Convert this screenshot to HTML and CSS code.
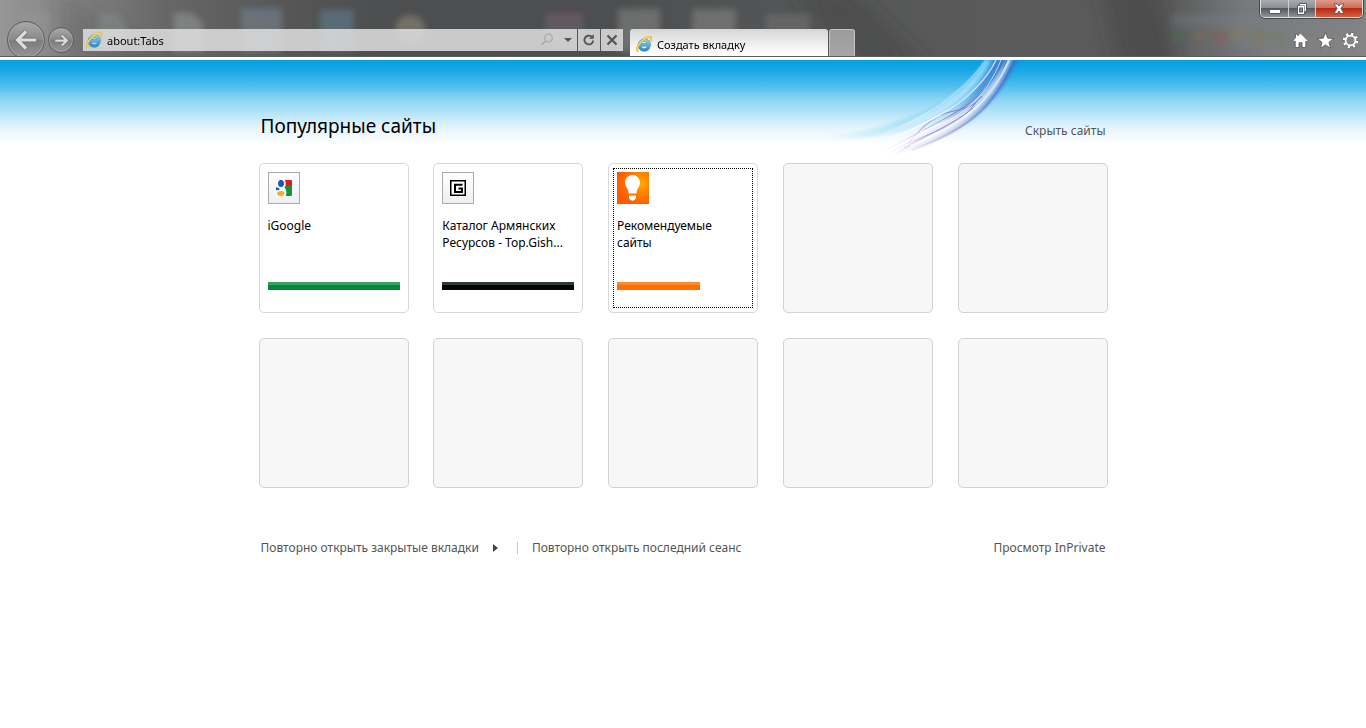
FILE: index.html
```
<!DOCTYPE html>
<html lang="ru">
<head>
<meta charset="utf-8">
<title>Создать вкладку</title>
<link rel="stylesheet" href="styles.css">
</head>
<body>
<svg class="defs" aria-hidden="true">
  <defs>
    <linearGradient id="eBlue" x1="0" y1="0" x2="0" y2="1"><stop offset="0" stop-color="#7fd2f6"/><stop offset="1" stop-color="#2c8fce"/></linearGradient>
    <symbol id="ie" viewBox="0 0 16 16">
      <path d="M12.900 10.800A4.900 4.900 0 1 1 13.200 8.800H4.600" fill="none" stroke="#3f86b5" stroke-width="3.200"/>
      <path d="M12.900 10.800A4.900 4.900 0 1 1 13.200 8.800H4.600" fill="none" stroke="url(#eBlue)" stroke-width="2.500"/>
      <path d="M2.600 15.200C-.6 15.400 1 9.800 5.600 5.400C10 1.200 15 -.4 15.200 2.400C15.300 3.400 14.800 4.400 14.300 5.200" fill="none" stroke="#c79a2d" stroke-width="1.900"/>
      <path d="M2.600 15.200C-.6 15.400 1 9.800 5.600 5.400C10 1.200 15 -.4 15.200 2.400C15.300 3.400 14.800 4.400 14.300 5.200" fill="none" stroke="#fada50" stroke-width="1.400"/>
    </symbol>
  </defs>
</svg>

<header class="chrome">
  <svg class="glass" viewBox="0 0 1366 57" preserveAspectRatio="none" aria-hidden="true">
    <defs>
      <filter id="soft" x="-30%" y="-50%" width="160%" height="200%"><feGaussianBlur stdDeviation="3"/></filter>
      <filter id="softer" x="-30%" y="-50%" width="160%" height="200%"><feGaussianBlur stdDeviation="9"/></filter>
    </defs>
    <g filter="url(#softer)">
      <path d="M790 -10H850L930 70H870Z" fill="#3f3f40" opacity=".35"/>
      <path d="M1100 -20H1150L1175 70H1120Z" fill="#3c3c3d" opacity=".4"/>
      <path d="M60 -10L120 30L180 70H60Z" fill="#3c3c3c" opacity=".2"/>
    </g>
    <g filter="url(#soft)" opacity=".65">
      <rect x="22" y="12" width="28" height="30" fill="#9aa09e" opacity=".5"/>
      <path d="M98 13H116L126 24V50H98Z" fill="#93989a" opacity=".6"/>
      <path d="M174 13H192L203 24V52H174Z" fill="#a1a5a5" opacity=".7"/>
      <rect x="241" y="9" width="41" height="44" fill="#7d8894" opacity=".8"/>
      <rect x="243" y="8" width="37" height="5" fill="#6383ad" opacity=".6"/>
      <rect x="320" y="10" width="34" height="42" fill="#607e90" opacity=".9"/>
      <circle cx="410" cy="30" r="15" fill="#96927c" opacity=".8"/>
      <rect x="545" y="14" width="38" height="34" fill="#716c70" opacity=".7"/>
      <rect x="548" y="13" width="34" height="7" fill="#8b5771" opacity=".6"/>
      <rect x="618" y="9" width="42" height="44" fill="#858585" opacity=".9"/>
      <rect x="692" y="9" width="44" height="44" fill="#858585" opacity=".9"/>
      <rect x="766" y="14" width="44" height="40" fill="#777" opacity=".8"/>
      <rect x="1172" y="14" width="190" height="13" fill="#758188" opacity=".6"/>
      <circle cx="1178" cy="37" r="5" fill="#4e7a50" opacity=".8"/>
      <circle cx="1199" cy="36" r="5" fill="#8c7452" opacity=".7"/>
      <circle cx="1220" cy="38" r="6" fill="#93554f" opacity=".8"/>
      <circle cx="1237" cy="35" r="6" fill="#8d8055" opacity=".8"/>
      <circle cx="1259" cy="37" r="6" fill="#857950" opacity=".8"/>
      <circle cx="1279" cy="38" r="5" fill="#66804f" opacity=".7"/>
      <rect x="1210" y="51" width="48" height="4" fill="#675c80" opacity=".6"/>
    </g>
  </svg>

  <nav class="history" aria-label="Навигация">
    <button class="round back" aria-label="Назад">
      <svg viewBox="0 0 24 24"><path d="M22 12H4M12 3.500L3.500 12L12 20.500" fill="none" stroke="#6a6a6a" stroke-width="4.600"/><path d="M22 12H4M12 3.500L3.500 12L12 20.500" fill="none" stroke="#dcdcdc" stroke-width="3.200"/></svg>
    </button>
    <button class="round forward" aria-label="Вперёд">
      <svg viewBox="0 0 24 24"><path d="M2 12H20M12.500 4L20.500 12L12.500 20" fill="none" stroke="#666" stroke-width="5.500"/><path d="M2 12H20M12.500 4L20.500 12L12.500 20" fill="none" stroke="#dadada" stroke-width="3.600"/></svg>
    </button>
  </nav>

  <form class="address">
    <svg class="site" aria-hidden="true"><use href="#ie"/></svg>
    <input class="url" type="text" value="about:Tabs" aria-label="Адрес">
    <button class="mini search" type="button" aria-label="Поиск">
      <svg viewBox="0 0 16 16"><circle cx="9.500" cy="6" r="3.800" fill="none" stroke="#aaa" stroke-width="1.300"/><path d="M6.800 8.800L2.500 13" stroke="#aaa" stroke-width="1.600"/></svg>
    </button>
    <button class="mini drop" type="button" aria-label="Список адресов">
      <svg viewBox="0 0 16 16"><path d="M5 6H13L9 10Z" fill="#555"/></svg>
    </button>
    <button class="mini ruled" type="button" aria-label="Обновить">
      <svg viewBox="0 0 16 16"><path d="M10.500 4.500A4.400 4.400 0 1 0 12.200 8.500" fill="none" stroke="#555" stroke-width="1.900"/><path d="M8 6.800H12.800V2Z" fill="#555"/></svg>
    </button>
    <button class="mini ruled" type="button" aria-label="Остановить">
      <svg viewBox="0 0 16 16"><path d="M3.500 3.500L12.500 12.500M12.500 3.500L3.500 12.500" stroke="#555" stroke-width="2.200"/></svg>
    </button>
  </form>

  <div class="tabs">
    <button class="tab"><svg class="site" aria-hidden="true"><use href="#ie"/></svg><span>Создать вкладку</span></button>
    <button class="newtab" aria-label="Новая вкладка"></button>
  </div>

  <div class="side">
    <div class="window">
      <button class="win min" aria-label="Свернуть"><svg viewBox="0 0 16 14"><rect x="2.500" y="7.500" width="11" height="4" rx=".5" fill="#fff" stroke="#555a66"/></svg></button>
      <button class="win max" aria-label="Развернуть"><svg viewBox="0 0 16 14"><path d="M5.500 1.500H12.500V9.500H10.500V12.500H3.500V3.500H5.500Z" fill="#fff" stroke="#555a66"/><path d="M5.500 3.500H10.500V9.500" fill="none" stroke="#858994" stroke-width=".8"/><rect x="5.500" y="6" width="3" height="4" fill="#888" stroke="#555a66"/></svg></button>
      <button class="win close" aria-label="Закрыть"><svg viewBox="0 0 16 14"><path d="M3 2H6.500L8 4L9.500 2H13L10 6.500L13 11.500H9.500L8 9L6.500 11.500H3L6 6.500Z" fill="#fff" stroke="#5d4a50" stroke-width=".9"/></svg></button>
    </div>
    <div class="tools">
      <button class="tool" aria-label="Домашняя страница"><svg viewBox="0 0 16 16"><path d="M8 1L15 8L14 9.200L13 8.400V14.600H9.400V10H6.600V14.600H3V8.400L2 9.200L1 8L3.300 5.500V2H5.400V3.500Z" fill="#fff" stroke="#4c4c4c" stroke-width=".7"/></svg></button>
      <button class="tool" aria-label="Избранное"><svg viewBox="0 0 16 16"><path d="M8 .5L10.100 5.800L15.700 6.100L11.300 9.700L12.800 15.300L8 12.200L3.200 15.300L4.700 9.700L.3 6.100L5.900 5.800Z" fill="#fff" stroke="#4c4c4c" stroke-width=".7"/></svg></button>
      <button class="tool" aria-label="Сервис"><svg viewBox="0 0 16 16"><circle cx="8" cy="8" r="6.200" fill="none" stroke="#4c4c4c" stroke-width="3.200" stroke-dasharray="2.900 1.970"/><circle cx="8" cy="8" r="4.600" fill="none" stroke="#fff" stroke-width="1.700"/><circle cx="8" cy="8" r="6.200" fill="none" stroke="#fff" stroke-width="2.400" stroke-dasharray="2.200 2.670" stroke-dashoffset="-.35"/></svg></button>
    </div>
  </div>
</header>

<main class="page">
  <svg class="swoosh" viewBox="0 0 240 100" aria-hidden="true">
    <defs>
      <linearGradient id="fade" x1="215" y1="0" x2="50" y2="95" gradientUnits="userSpaceOnUse"><stop offset="0" stop-color="#fff" stop-opacity=".6"/><stop offset=".6" stop-color="#fff" stop-opacity=".85"/><stop offset="1" stop-color="#fff" stop-opacity="0"/></linearGradient>
      <linearGradient id="ribbon" x1="215" y1="0" x2="90" y2="95" gradientUnits="userSpaceOnUse"><stop offset="0" stop-color="#2f6fca"/><stop offset=".3" stop-color="#4a90da"/><stop offset=".55" stop-color="#a3bfe8"/><stop offset=".8" stop-color="#e2d9f0"/><stop offset="1" stop-color="#f4eef9" stop-opacity="0"/></linearGradient>
      <linearGradient id="mauve" x1="210" y1="0" x2="80" y2="95" gradientUnits="userSpaceOnUse"><stop offset="0" stop-color="#4c68c4"/><stop offset=".5" stop-color="#9382c4"/><stop offset="1" stop-color="#e0b8dc" stop-opacity="0"/></linearGradient>
      <linearGradient id="sky" x1="190" y1="0" x2="20" y2="85" gradientUnits="userSpaceOnUse"><stop offset="0" stop-color="#5cc4f3"/><stop offset=".6" stop-color="#a6dff8"/><stop offset="1" stop-color="#c8edfb" stop-opacity="0"/></linearGradient>
      <filter id="s1"><feGaussianBlur stdDeviation="1.500"/></filter>
      <filter id="s2"><feGaussianBlur stdDeviation=".5"/></filter>
    </defs>
    <g filter="url(#s1)">
      <path d="M185 0C158 42 105 66 20 78C90 84 165 62 202 0Z" fill="url(#sky)" opacity=".75"/>
      <path d="M218 0C197 45 165 78 88 96C120 76 172 52 192 0Z" fill="url(#ribbon)" opacity=".75"/>
      <path d="M186 0C160 42 120 62 50 83C115 74 165 50 190 0Z" fill="url(#fade)" opacity=".5"/>
      <path d="M212 0C192 42 170 68 96 94C150 66 180 45 207 0Z" fill="url(#fade)" opacity=".8"/>
      <path d="M174 52C150 66 125 78 95 90C120 66 150 58 174 52Z" fill="#fff" opacity=".5"/>
    </g>
    <g fill="none" stroke="url(#mauve)" filter="url(#s2)">
      <path d="M203 0C184 48 140 58 84 92"/>
      <path d="M207 0C188 54 150 60 96 94"/>
      <path d="M198 0C178 42 130 52 108 84"/>
      <path d="M214 0C194 50 165 70 112 90" stroke-width="2" opacity=".6"/>
      <path d="M182 36C165 58 145 42 118 72"/>
      <path d="M176 42C160 66 140 66 104 88"/>
      <path d="M170 50C150 74 130 68 88 94" opacity=".7"/>
    </g>
    <g fill="none" stroke="url(#fade)" filter="url(#s2)">
      <path d="M196 0C176 42 130 62 70 88" stroke-width="1.500"/>
      <path d="M209 0C190 42 165 62 110 86" stroke-width="2"/>
      <path d="M201 0C186 38 160 60 120 72"/>
      <path d="M186 0C160 36 125 58 75 78" stroke-width="1.500" opacity=".4"/>
    </g>
  </svg>

  <div class="content">
    <div class="heading">
      <h1>Популярные сайты</h1>
      <a class="link hide" href="#hide">Скрыть сайты</a>
    </div>

    <div class="grid">
      <a class="card" href="#igoogle">
        <span class="icon framed"><svg viewBox="0 0 16 16"><rect width="16" height="16" rx="1.500" fill="#fff"/><path d="M8 0H15Q16 0 16 1V6H10Q8 3 8 0Z" fill="#e01b1b"/><path d="M8.500 6H16V14.500Q16 16 14.500 16H9.500Q11.500 12 8.500 9Z" fill="#16913c"/><ellipse cx="5" cy="3.500" rx="3" ry="3.600" fill="#1a58b5"/><path d="M0 7Q3 8 4 9Q2 11 0 10Z" fill="#1a58b5"/><ellipse cx="4.800" cy="13.500" rx="3.700" ry="2.500" fill="#f0ae25"/><path d="M8.200 0Q10.400 4.500 7.300 7.500Q11.200 10 9 16" fill="none" stroke="#fff" stroke-width="1.200"/></svg></span>
        <span class="name">iGoogle</span>
        <span class="bar green"></span>
      </a>
      <a class="card" href="#gish">
        <span class="icon framed"><svg viewBox="0 0 16 16"><rect x=".75" y=".75" width="14.500" height="14.500" fill="#fff" stroke="#000" stroke-width="1.500"/><path d="M12.500 4.800H5V12H12V8.500H8.500" fill="none" stroke="#000" stroke-width="2"/></svg></span>
        <span class="name">Каталог Армянских Ресурсов - Top.Gish...</span>
        <span class="bar black"></span>
      </a>
      <a class="card focused" href="#suggested">
        <span class="icon bulb"><svg viewBox="0 0 32 32"><path d="M15.500 3A7.500 7.500 0 0 1 23 10.500C23 15 19.500 16.500 19.500 21.500H11.700C11.700 16.500 8 15 8 10.500A7.500 7.500 0 0 1 15.500 3Z" fill="#fff"/><path d="M12 23.500H19V26Q18 28.800 15.500 28.800Q13 28.800 12 26Z" fill="#fff"/></svg></span>
        <span class="name">Рекомендуемые сайты</span>
        <span class="bar orange"></span>
      </a>
      <div class="card empty"></div>
      <div class="card empty"></div>
      <div class="card empty"></div>
      <div class="card empty"></div>
      <div class="card empty"></div>
      <div class="card empty"></div>
      <div class="card empty"></div>
    </div>

    <footer class="actions">
      <button class="link reopen">Повторно открыть закрытые вкладки<svg viewBox="0 0 5 8" aria-hidden="true"><path d="M0 0L5 4L0 8Z" fill="#444"/></svg></button>
      <a class="link session" href="#session">Повторно открыть последний сеанс</a>
      <a class="link private" href="#inprivate">Просмотр InPrivate</a>
    </footer>
  </div>
</main>
</body>
</html>
```
FILE: styles.css
```
* { box-sizing: border-box; }

body {
  margin: 0;
  background: #fff;
  color: #000;
  font: 12px/17px "Noto Sans", "Open Sans", sans-serif;
}

button, input { font: inherit; color: inherit; }
button { margin: 0; padding: 0; border: 0; background: none; }
a { color: inherit; text-decoration: none; }
.defs { display: block; width: 0; height: 0; }

/* Browser chrome */
.chrome {
  position: relative;
  display: flex;
  height: 57px;
  overflow: hidden;
  border-bottom: 1px solid #5e5a60;
  background: linear-gradient(90deg, #969696 0, #858585 5%, #676767 12%, #565656 21%, #4d4e4f 28%, #4d4e4f 44%, #555657 60%, #5a5a5a 72%, #5a5a5a 80%, #555 85%, #777a7b 91%, #858585 100%);
  font-size: 11px;
}
.glass { position: absolute; inset: 0; width: 100%; height: 100%; }
.history, .address, .tabs, .side { position: relative; }

.history {
  display: flex;
  flex: none;
  align-items: center;
  gap: 3px;
  width: 83px;
  height: 38px;
  margin-top: 21px;
  padding-left: 7px;
}
.round {
  display: grid;
  flex: none;
  place-items: center;
  border: 1px solid #5b5b5b;
  border-radius: 50%;
  background: linear-gradient(#a9a9a9, #8a8a8a 48%, #7c7c7c 52%, #969696);
  box-shadow: inset 0 0 0 1px #a6a6a6;
}
.back { width: 38px; height: 38px; }
.back svg { width: 24px; height: 24px; }
.forward { width: 26px; height: 26px; }
.forward svg { width: 15px; height: 15px; }

.address {
  display: flex;
  flex: 0 1 540px;
  align-items: center;
  height: 22px;
  margin-top: 29px;
  padding-left: 3px;
  background: rgba(222, 222, 222, .86);
}
.site { flex: none; width: 16px; height: 16px; }
.url {
  flex: 1;
  min-width: 0;
  height: 22px;
  padding: 0 0 0 5px;
  border: 0;
  outline: 0;
  background: none;
}
.mini {
  display: grid;
  flex: none;
  place-items: center;
  width: 20px;
  height: 22px;
}
.mini svg { width: 16px; height: 16px; }
.mini.ruled { width: 23px; border-left: 1px solid #555; }

.tabs {
  display: flex;
  flex: 0 1 225px;
  height: 28px;
  margin: 29px 0 0 7px;
}
.tab {
  display: flex;
  flex: 1;
  align-items: center;
  gap: 5px;
  min-width: 0;
  padding: 2px 0 0 6px;
  border-radius: 3px 3px 0 0;
  background: linear-gradient(#d6d6d6, #fff 90%);
  white-space: nowrap;
}
.newtab {
  flex: none;
  width: 26px;
  margin-left: 1px;
  border: 1px solid #c4c4c4;
  border-bottom-color: #555;
  border-radius: 3px 3px 0 0;
  background: linear-gradient(#9c9c9c, #a6a6a6);
}

.side {
  display: flex;
  flex-direction: column;
  align-items: flex-end;
  margin-left: auto;
}
.window {
  display: flex;
  height: 18px;
  margin-right: 3px;
  overflow: hidden;
  border: 1px solid #dedede;
  border-top: 0;
  border-radius: 0 0 5px 5px;
  box-shadow: 0 0 0 1px #474747;
}
.win {
  display: grid;
  place-items: center;
  width: 27px;
  background: linear-gradient(#a9acb0, #8b8e92 45%, #55585d 50%, #909499);
}
.win svg { width: 16px; height: 14px; }
.win + .win { border-left: 1px solid #d0d0d0; }
.win.close {
  width: 47px;
  background: linear-gradient(#dc9a8b, #cf6e58 45%, #b52a10 50%, #d8603f);
}
.tools { display: flex; gap: 8px; margin: 14px 7px 0 0; }
.tool { width: 17px; height: 17px; }
.tool svg { display: block; width: 17px; height: 17px; overflow: visible; }

/* New tab page */
.page {
  position: relative;
  margin-top: 3px;
  padding: 53px 16px 0;
  background: linear-gradient(#069fe0 0, #17a8e5 12%, #4dbcec 30%, #8ed6f4 48%, #bde7f9 66%, #e4f4fc 80%, #fff 100%) 0 0 / 100% 84px no-repeat;
}
.swoosh {
  position: absolute;
  top: 0;
  left: calc(50% + 117px);
  width: 240px;
  height: 100px;
}
.content { position: relative; max-width: 849px; margin: 0 auto; }
.heading {
  display: flex;
  align-items: flex-start;
  justify-content: space-between;
  height: 50px;
  padding: 0 2px;
}
h1 { margin: 0; font-size: 19px; line-height: 26px; font-weight: 400; }
.link { color: #555; white-space: nowrap; }
.hide { margin-top: 9px; }

.grid {
  display: grid;
  grid-template-columns: repeat(5, 150px);
  justify-content: space-between;
  row-gap: 25px;
}
.card {
  display: flex;
  flex-direction: column;
  height: 150px;
  padding: 8px;
  border: 1px solid #d8d8d8;
  border-radius: 5px;
  background: #fff;
}
.card.empty { background: #f7f7f7; border-color: #d2d2d2; }
.card.focused { outline: 1px dotted #000; outline-offset: -6px; }
.icon {
  display: grid;
  place-items: center;
  width: 32px;
  height: 32px;
}
.framed { border: 1px solid #aaa; background: linear-gradient(#fff, #efefef); }
.framed svg { width: 16px; height: 16px; }
.bulb { background: radial-gradient(circle at 75% 35%, #ffa800, #ff7a00 40%, #fd5a00 75%); }
.bulb svg { width: 32px; height: 32px; }
.name { height: 34px; margin-top: 13px; }
.bar { height: 8px; margin-top: 31px; border-top: 3px solid; }
.green { border-color: #36a162; background: #058838; }
.black { border-color: #343a37; background: #030606; }
.orange { width: 83px; border-color: #ff8a2e; background: #ff6f00; }

.actions {
  display: flex;
  align-items: center;
  margin-top: 51px;
  padding: 0 2px;
}
.reopen { display: flex; align-items: center; gap: 14px; }
.reopen svg { width: 5px; height: 8px; }
.session { position: relative; margin-left: 19px; padding-left: 15px; }
.session::before {
  position: absolute;
  top: 3px;
  bottom: 2px;
  left: 0;
  border-left: 1px solid #c4c8d4;
  content: "";
}
.private { margin-left: auto; }
```
